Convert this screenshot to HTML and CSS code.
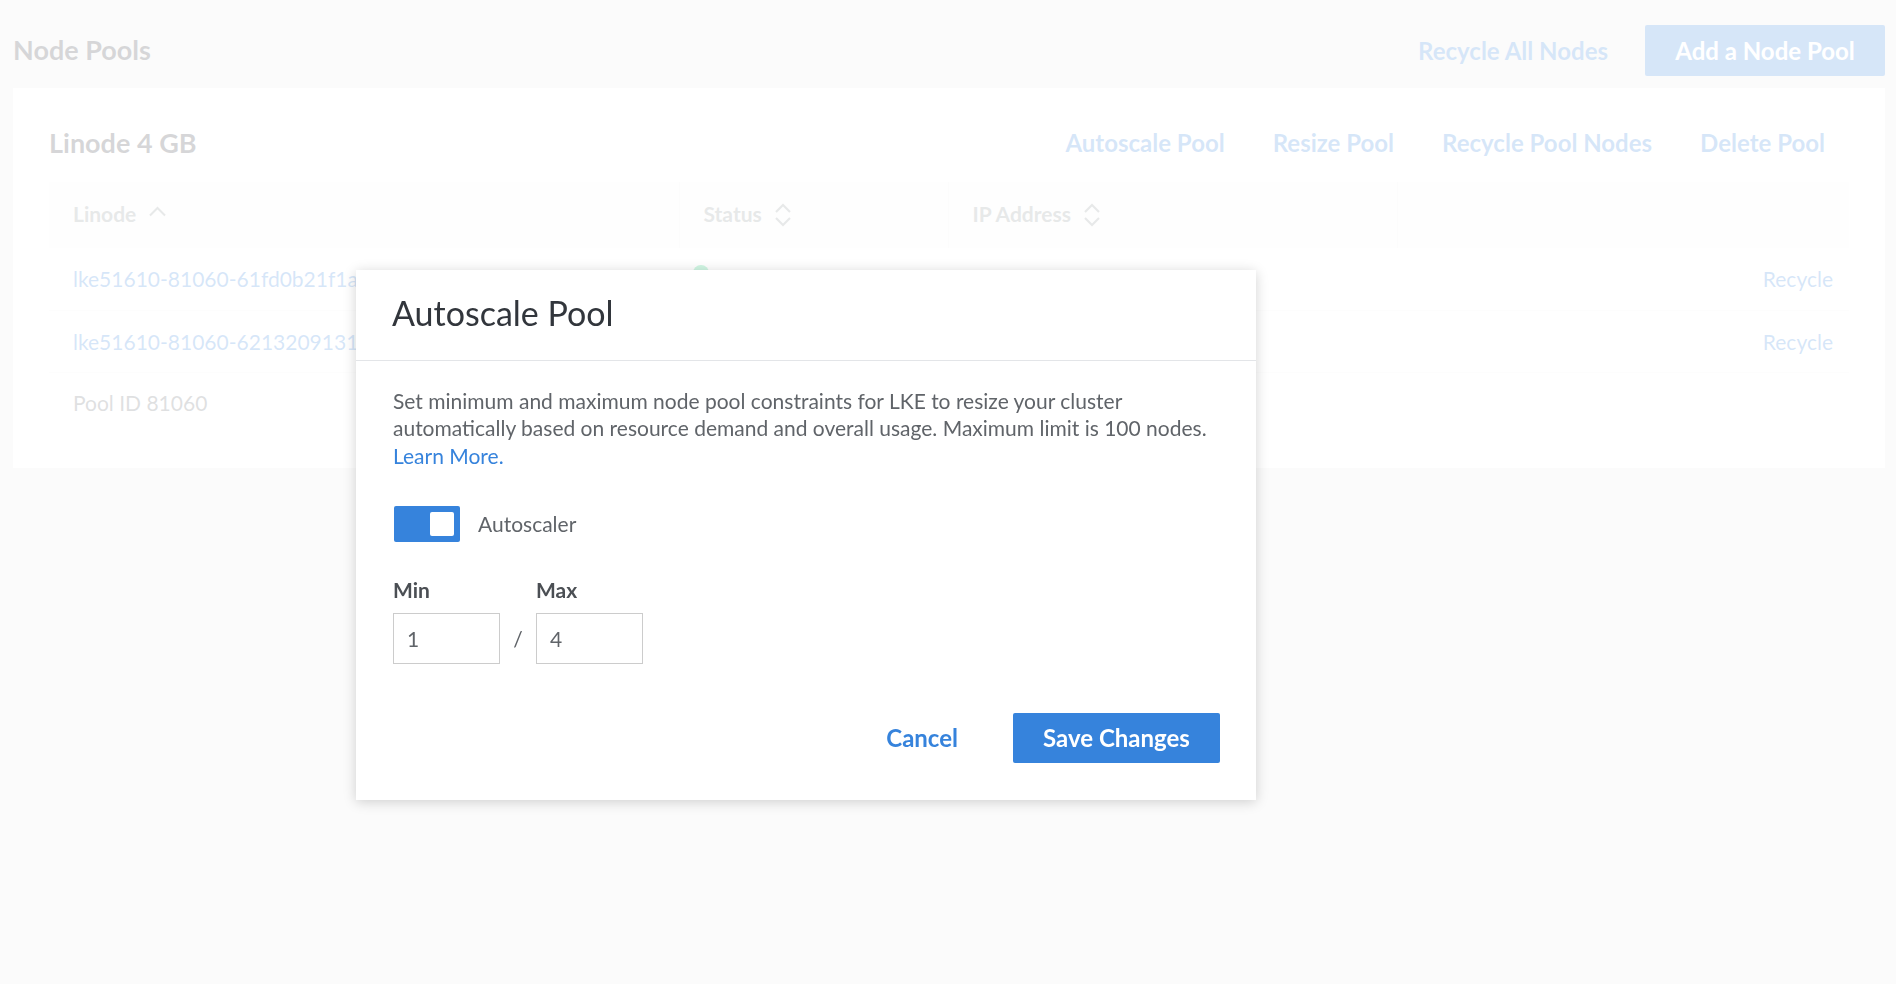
FILE: index.html
```html
<!DOCTYPE html>
<html lang="en">
<head>
<meta charset="utf-8">
<title>Node Pools</title>
<link rel="stylesheet" href="styles.css">
</head>
<body>
<div class="page">
  <div class="top-bar">
    <h2 class="page-title">Node Pools</h2>
    <div class="top-actions">
      <button class="link-btn recycle-all">Recycle All Nodes</button>
      <button class="primary-btn add-pool">Add a Node Pool</button>
    </div>
  </div>

  <section class="card">
    <div class="pool-head">
      <h3 class="pool-title">Linode 4 GB</h3>
      <div class="pool-actions">
        <button class="link-btn">Autoscale Pool</button>
        <button class="link-btn">Resize Pool</button>
        <button class="link-btn">Recycle Pool Nodes</button>
        <button class="link-btn">Delete Pool</button>
      </div>
    </div>

    <table class="nodes">
      <colgroup>
        <col class="c-linode"><col class="c-status"><col class="c-ip"><col class="c-act">
      </colgroup>
      <thead>
        <tr>
          <th><span class="th-inner">Linode
            <svg class="sort-up" width="19" height="11" viewBox="0 0 19 11"><polyline points="2,9.5 9.5,2 17,9.5" fill="none" stroke="#888f91" stroke-width="2"/></svg></span></th>
          <th><span class="th-inner">Status
            <svg class="sort-both" width="18" height="24" viewBox="0 0 18 24"><polyline points="2,9 9,2 16,9" fill="none" stroke="#888f91" stroke-width="2"/><polyline points="2,15 9,22 16,15" fill="none" stroke="#888f91" stroke-width="2"/></svg></span></th>
          <th><span class="th-inner">IP Address
            <svg class="sort-both" width="18" height="24" viewBox="0 0 18 24"><polyline points="2,9 9,2 16,9" fill="none" stroke="#888f91" stroke-width="2"/><polyline points="2,15 9,22 16,15" fill="none" stroke="#888f91" stroke-width="2"/></svg></span></th>
          <th></th>
        </tr>
      </thead>
      <tbody>
        <tr>
          <td><a class="node-link">lke51610-81060-61fd0b21f1a4</a></td>
          <td><span class="status"><span class="dot"></span>Running</span></td>
          <td>192.46.213.37</td>
          <td class="act"><a class="row-link">Recycle</a></td>
        </tr>
        <tr>
          <td><a class="node-link">lke51610-81060-6213209131c5</a></td>
          <td><span class="status"><span class="dot"></span>Running</span></td>
          <td>172.104.20.118</td>
          <td class="act"><a class="row-link">Recycle</a></td>
        </tr>
        <tr class="pool-row">
          <td colspan="4">Pool ID 81060</td>
        </tr>
      </tbody>
    </table>
  </section>
</div>

<div class="backdrop"></div>

<div class="dialog" role="dialog">
  <div class="dialog-head">
    <h2 class="dialog-title">Autoscale Pool</h2>
  </div>
  <div class="dialog-body">
    <p class="dialog-text">Set minimum and maximum node pool constraints for LKE to resize your cluster automatically based on resource demand and overall usage. Maximum limit is 100 nodes. <a class="learn">Learn More.</a></p>

    <div class="toggle-row">
      <span class="toggle"><span class="knob"></span></span>
      <span class="toggle-label">Autoscaler</span>
    </div>

    <div class="range">
      <div class="field">
        <label class="field-label">Min</label>
        <div class="input">1</div>
      </div>
      <span class="slash">/</span>
      <div class="field">
        <label class="field-label">Max</label>
        <div class="input">4</div>
      </div>
    </div>

    <div class="dialog-actions">
      <button class="cancel-btn">Cancel</button>
      <button class="primary-btn save-btn">Save Changes</button>
    </div>
  </div>
</div>
</body>
</html>
```

FILE: styles.css
```css
* { box-sizing: border-box; }

html, body {
  margin: 0;
  padding: 0;
}

body {
  background: #e9e9e9;
  font-family: Lato, "Open Sans", "Liberation Sans", sans-serif;
  color: #32363c;
  width: 1896px;
  height: 984px;
  overflow: hidden;
}

button {
  font-family: inherit;
  border: 0;
  background: none;
  cursor: pointer;
}

.page {
  padding: 0 11px 0 13px;
}

/* top bar */
.top-bar {
  display: flex;
  align-items: center;
  justify-content: space-between;
  padding-top: 25px;
  margin-bottom: 12px;
}

.page-title {
  margin: 0;
  font-size: 27px;
  font-weight: 700;
  color: #32363c;
  line-height: 51px;
  position: relative;
  top: -1px;
}

.top-actions {
  display: flex;
  align-items: center;
}

.link-btn {
  font-size: 24px;
  font-weight: 700;
  color: #3683dc;
  padding: 0 24px;
  height: 40px;
}

.recycle-all {
  padding: 0;
  margin-right: 37px;
}

.primary-btn {
  background: #3683dc;
  color: #fff;
  font-size: 24px;
  font-weight: 700;
  border-radius: 2px;
  padding: 0 30px;
  height: 51px;
}

.add-pool {
  width: 240px;
  padding: 0;
}

/* card */
.card {
  background: #fff;
  padding: 35px 36px 36px 36px;
}

.pool-head {
  display: flex;
  align-items: center;
  justify-content: space-between;
  height: 38px;
  margin-bottom: 21px;
}

.pool-title {
  margin: 0;
  font-size: 27px;
  font-weight: 700;
  color: #32363c;
}

.pool-actions {
  display: flex;
}

/* table */
.nodes {
  width: 100%;
  border-collapse: collapse;
  table-layout: fixed;
  font-size: 21px;
}

.c-linode { width: 630px; }
.c-status { width: 269px; }
.c-ip { width: 449px; }

.nodes thead tr {
  background: #f7f7f7;
  height: 66px;
}

.nodes th {
  text-align: left;
  font-weight: 700;
  color: #888f91;
  padding: 0 0 4px 24px;
  border-left: 1px solid #f0f0f0;
}

.nodes th:first-child { border-left: 0; }

.th-inner {
  display: inline-flex;
  align-items: center;
  gap: 12px;
}

.sort-both { position: relative; top: 2px; }
.sort-up { margin-top: -4px; }

.nodes td {
  padding: 0 0 0 24px;
  color: #606469;
  border-bottom: 1px solid #f4f4f4;
  white-space: nowrap;
  overflow: hidden;
}

.nodes tbody tr { height: 62px; }
.nodes tbody tr.pool-row { height: 60px; }
.nodes tbody tr.pool-row td { border-bottom: 0; }

.node-link, .row-link {
  color: #3683dc;
}

.status {
  display: inline-flex;
  align-items: center;
  gap: 10px;
  margin-left: -10px;
}

.dot {
  width: 16px;
  height: 16px;
  border-radius: 50%;
  background: #17cf73;
  position: relative;
  top: -6px;
}

.nodes td.act {
  text-align: right;
  padding: 0 16px 0 0;
}

/* backdrop */
.backdrop {
  position: fixed;
  inset: 0;
  background: rgba(255, 255, 255, 0.8);
}

/* dialog */
.dialog {
  position: fixed;
  left: 356px;
  top: 270px;
  width: 900px;
  background: #fff;
  box-shadow: 0 2px 12px rgba(0, 0, 0, 0.18);
}

.dialog-head {
  padding: 24px 37px 28px 36px;
  border-bottom: 1px solid #e3e5e8;
}

.dialog-title {
  margin: 0;
  font-size: 34px;
  font-weight: 400;
  line-height: 38px;
  color: #32363c;
}

.dialog-body {
  padding: 26px 36px 37px 37px;
}

.dialog-text {
  margin: 0;
  font-size: 21px;
  line-height: 27.3px;
  color: #606469;
}

.learn {
  color: #3683dc;
}

.toggle-row {
  display: flex;
  align-items: center;
  gap: 18px;
  margin-top: 37px;
  padding-left: 1px;
}

.toggle {
  width: 66px;
  height: 36px;
  background: #3683dc;
  border-radius: 2px;
  display: flex;
  align-items: center;
  justify-content: flex-end;
  padding-right: 6px;
}

.knob {
  width: 24px;
  height: 24px;
  background: #fff;
  border-radius: 2px;
}

.toggle-label {
  font-size: 21px;
  color: #606469;
}

.range {
  display: flex;
  align-items: flex-end;
  margin-top: 34px;
}

.field {
  display: flex;
  flex-direction: column;
}

.field-label {
  font-size: 21px;
  font-weight: 700;
  line-height: 27px;
  color: #4b4f54;
  margin-bottom: 10px;
}

.input {
  width: 107px;
  height: 51px;
  border: 1px solid #ccc;
  font-size: 21px;
  color: #606469;
  padding-left: 13px;
  display: flex;
  align-items: center;
}

.slash {
  width: 36px;
  height: 51px;
  display: flex;
  align-items: center;
  justify-content: center;
  font-size: 21px;
  color: #606469;
}

.dialog-actions {
  display: flex;
  justify-content: flex-end;
  align-items: center;
  margin-top: 49px;
}

.cancel-btn {
  font-size: 24px;
  font-weight: 700;
  color: #3683dc;
  padding: 0 30px;
  height: 50px;
  margin-right: 25px;
}

.save-btn {
  width: 207px;
  height: 50px;
  padding: 0;
}
```
